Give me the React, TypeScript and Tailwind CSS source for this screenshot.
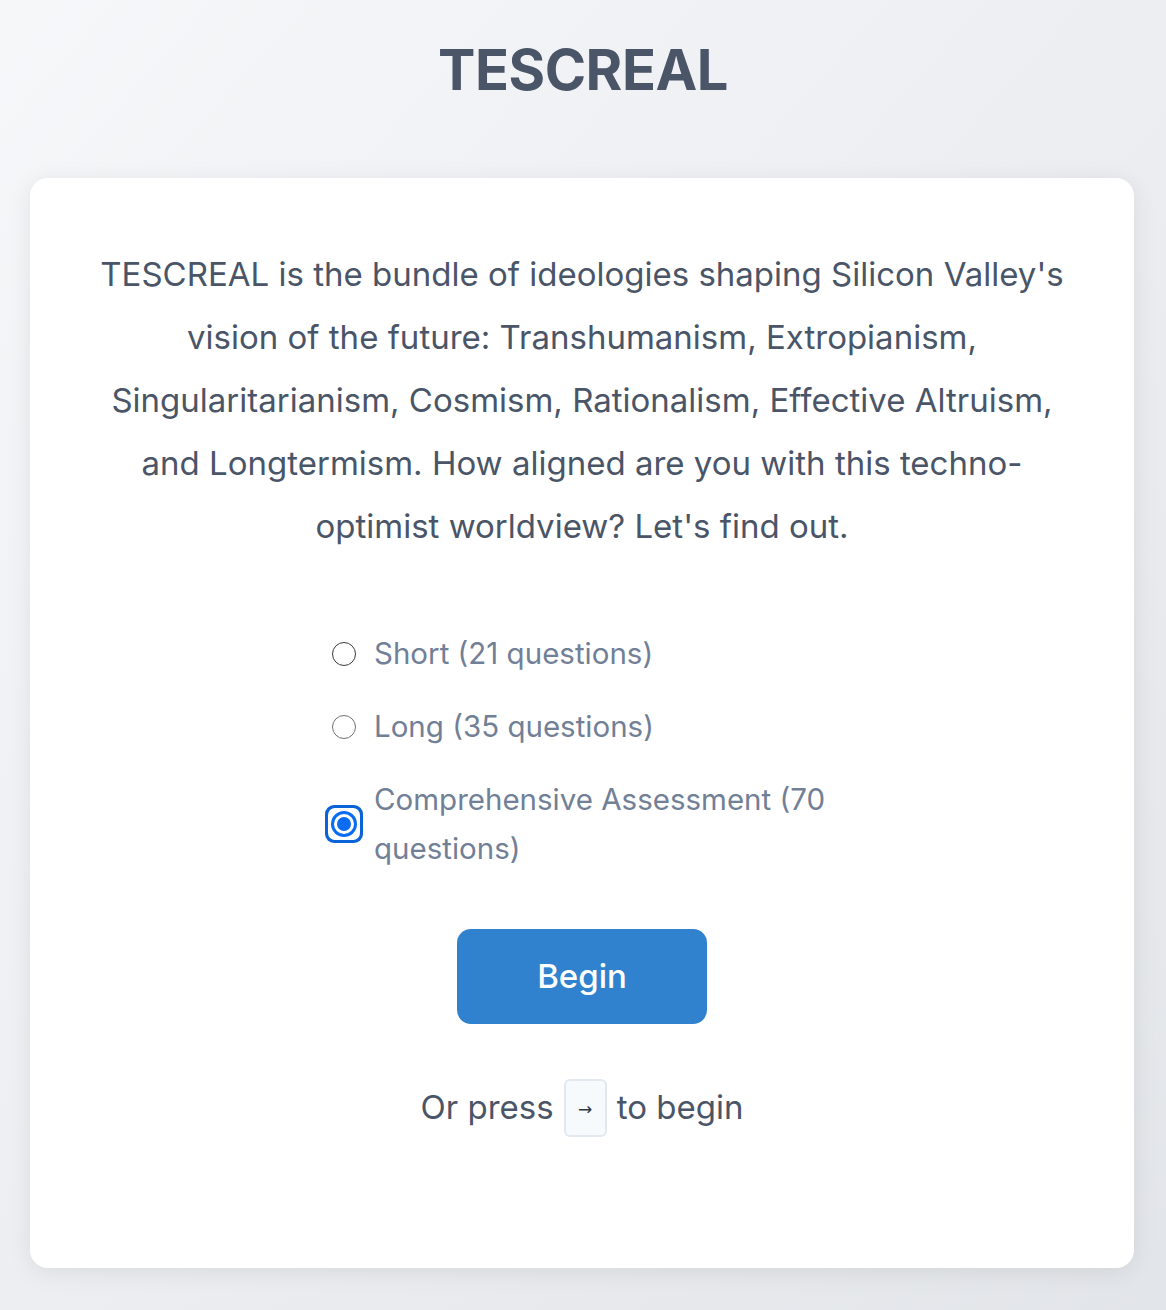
import { useState } from 'react';

const OPTIONS = [
  { id: 'short', label: 'Short (21 questions)' },
  { id: 'long', label: 'Long (35 questions)' },
  { id: 'full', label: 'Comprehensive Assessment (70 questions)' },
];

function Radio({ checked, dark }: { checked: boolean; dark?: boolean }) {
  if (checked) {
    // focus ring sits over the label gap, the radio itself stays 24px wide
    return (
      <span className="relative h-[24px] w-[24px] shrink-0">
        <span className="absolute -top-[7px] -left-[7px] flex h-[38px] w-[38px] items-center justify-center rounded-[9px] bg-[#0a64d8]">
          <span className="flex h-[32px] w-[32px] items-center justify-center rounded-[7px] bg-white">
            <span className="flex h-[26px] w-[26px] items-center justify-center rounded-full bg-[#0a6cf0]">
              <span className="flex h-[20px] w-[20px] items-center justify-center rounded-full bg-white">
                <span className="h-[14px] w-[14px] rounded-full bg-[#0a6cf0]" />
              </span>
            </span>
          </span>
        </span>
      </span>
    );
  }
  return (
    <span
      className={`h-[24px] w-[24px] shrink-0 rounded-full border-[1.5px] bg-white ${dark ? 'border-[#3a3a3a]' : 'border-[#707070]'}`}
    />
  );
}

export default function App() {
  const [selected, setSelected] = useState('full');

  return (
    <div
      className="min-h-[1310px] bg-linear-to-br from-[#f6f7f9] to-[#e2e5e9] px-[30px] pt-[35px] pb-[42px]"
      style={{ fontFamily: 'Inter, "Noto Sans", sans-serif' }}
    >
      <h1 className="text-center text-[56px] font-bold leading-[70px] tracking-[-0.5px] text-[#4a5568]">TESCREAL</h1>

      <div className="mt-[73px] flex h-[1090px] w-[1104px] flex-col rounded-[18px] bg-white px-[64px] pt-[65px] shadow-[0_4px_24px_rgba(0,0,0,0.08)]">
        <p className="text-center text-[33px] leading-[63px] text-[#4a5568]">
          TESCREAL is the bundle of ideologies shaping Silicon Valley's vision of the future: Transhumanism, Extropianism,
          Singularitarianism, Cosmism, Rationalism, Effective Altruism, and Longtermism. How aligned are you with this
          techno-optimist worldview? Let's find out.
        </p>

        <div className="mx-auto mt-[71px] flex w-[500px] flex-col gap-[24px]">
          {OPTIONS.map((o, i) => (
            <label
              key={o.id}
              onClick={() => setSelected(o.id)}
              className="flex cursor-pointer items-center gap-[18px] text-[29.5px] leading-[49px] text-[#718096]"
            >
              <Radio checked={selected === o.id} dark={i === 0} />
              <span>{o.label}</span>
            </label>
          ))}
        </div>

        <button className="mx-auto mt-[56px] h-[95px] w-[250px] rounded-[14px] bg-[#3182ce] text-[33px] font-medium text-white">
          Begin
        </button>

        <div className="mt-[55px] flex items-center justify-center text-[33px] text-[#4a5568]">
          <span>Or press</span>
          <kbd className="mx-[10px] flex h-[58px] w-[43px] items-center justify-center rounded-[6px] border-2 border-[#e2e8f0] bg-[#f7fafc] pt-[2px] font-['DejaVu_Sans',sans-serif] text-[17px] leading-none text-[#2d3748]">
            →
          </kbd>
          <span>to begin</span>
        </div>
      </div>
    </div>
  );
}
